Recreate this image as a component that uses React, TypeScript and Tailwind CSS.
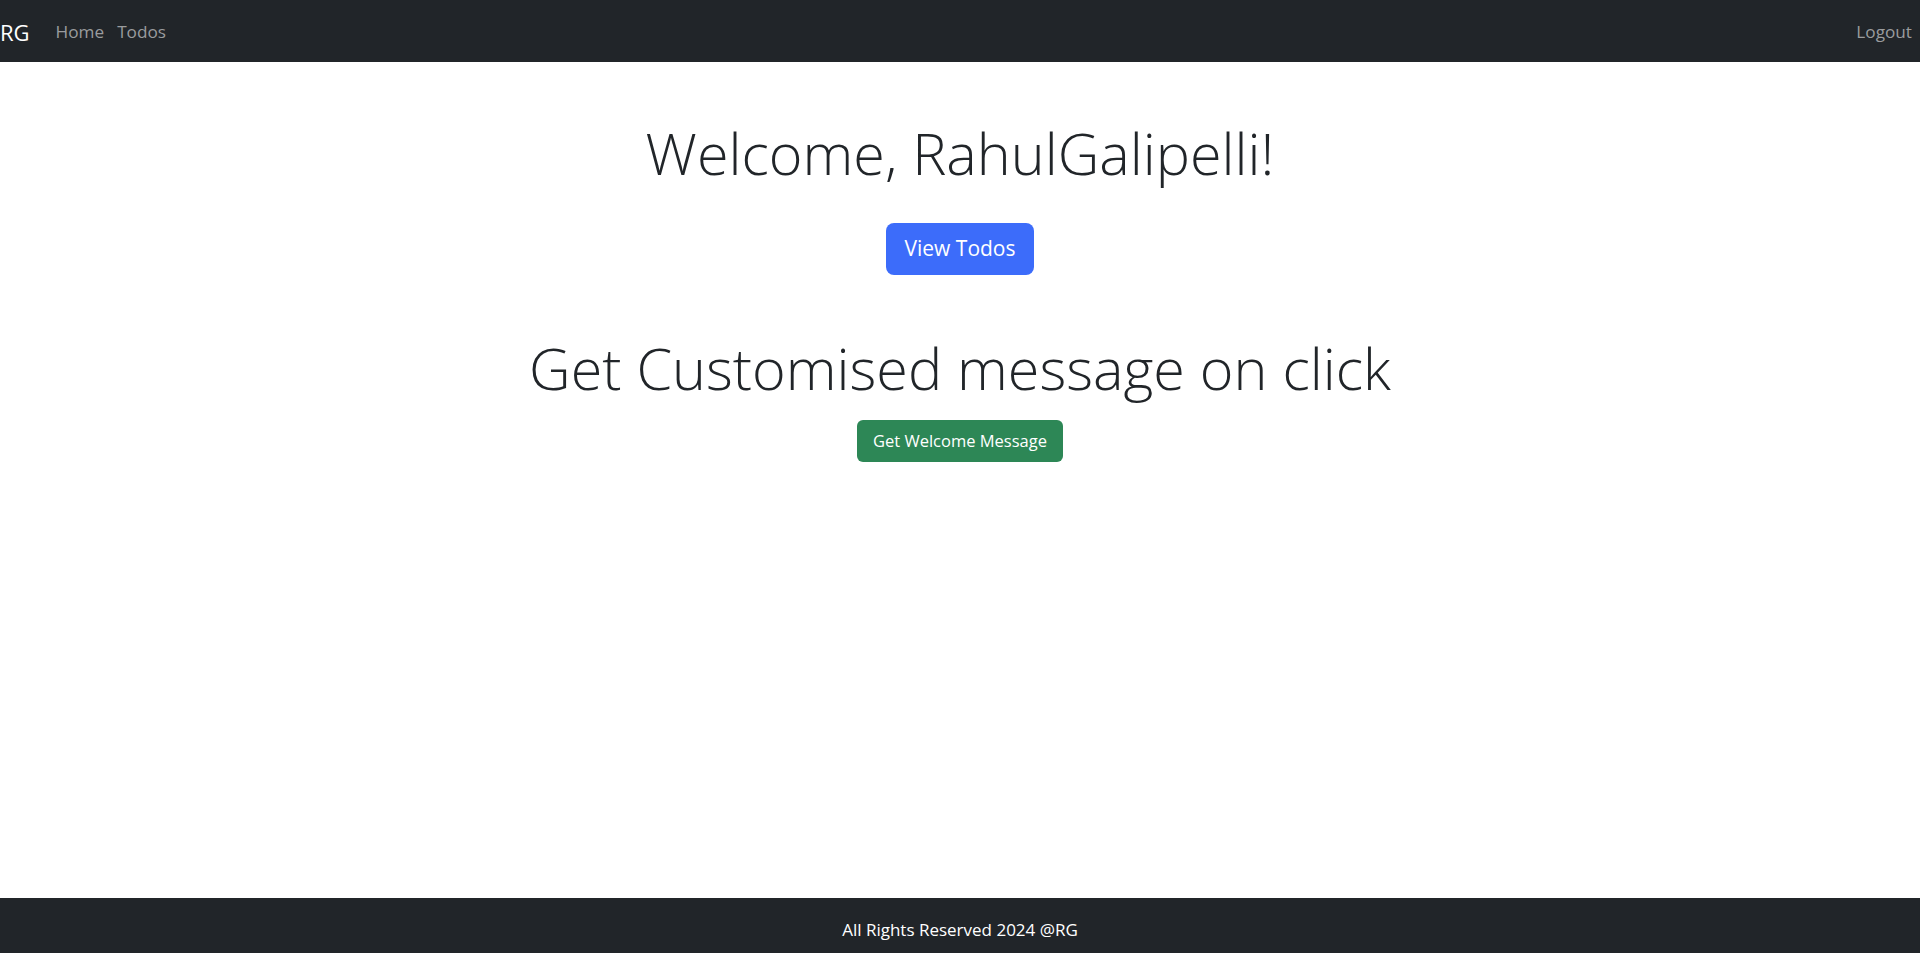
import React from "react";

const font = { fontFamily: '"Open Sans", "Noto Sans", sans-serif' };

const Navbar = () => (
  <nav className="h-[62px] bg-[#212529] flex items-center justify-between pt-[2px] pr-[8px]">
    <div className="flex items-center">
      <a href="#" className="text-[22px] text-white leading-none">
        RG
      </a>
      <a href="#" className="ml-[26px] text-[17.2px] text-[#9a9c9e]">
        Home
      </a>
      <a href="#" className="ml-[13px] text-[17.2px] text-[#9a9c9e]">
        Todos
      </a>
    </div>
    <a href="#" className="text-[17.2px] text-[#9a9c9e]">
      Logout
    </a>
  </nav>
);

const Footer = () => (
  <footer className="h-[55px] bg-[#212529] flex items-center justify-center pt-[8px] text-white text-[17px]">
    All Rights Reserved 2024 @RG
  </footer>
);

export default function App() {
  return (
    <div className="min-h-screen flex flex-col bg-white" style={font}>
      <Navbar />
      <main className="flex-1 flex flex-col items-center text-center text-[#212529]">
        <h1 className="mt-[57px] text-[57.5px] font-light leading-[1.2]">
          Welcome, RahulGalipelli!
        </h1>
        <button className="mt-[35px] w-[148px] h-[52px] rounded-[8px] bg-[#3c6cfa] text-white text-[21px]">
          View Todos
        </button>
        <h1 className="mt-[59px] text-[57.5px] font-light leading-[1.2]">
          Get Customised message on click
        </h1>
        <button className="mt-[17px] w-[206px] h-[42px] rounded-[6px] bg-[#2d8756] text-white text-[16.5px]">
          Get Welcome Message
        </button>
      </main>
      <Footer />
    </div>
  );
}
